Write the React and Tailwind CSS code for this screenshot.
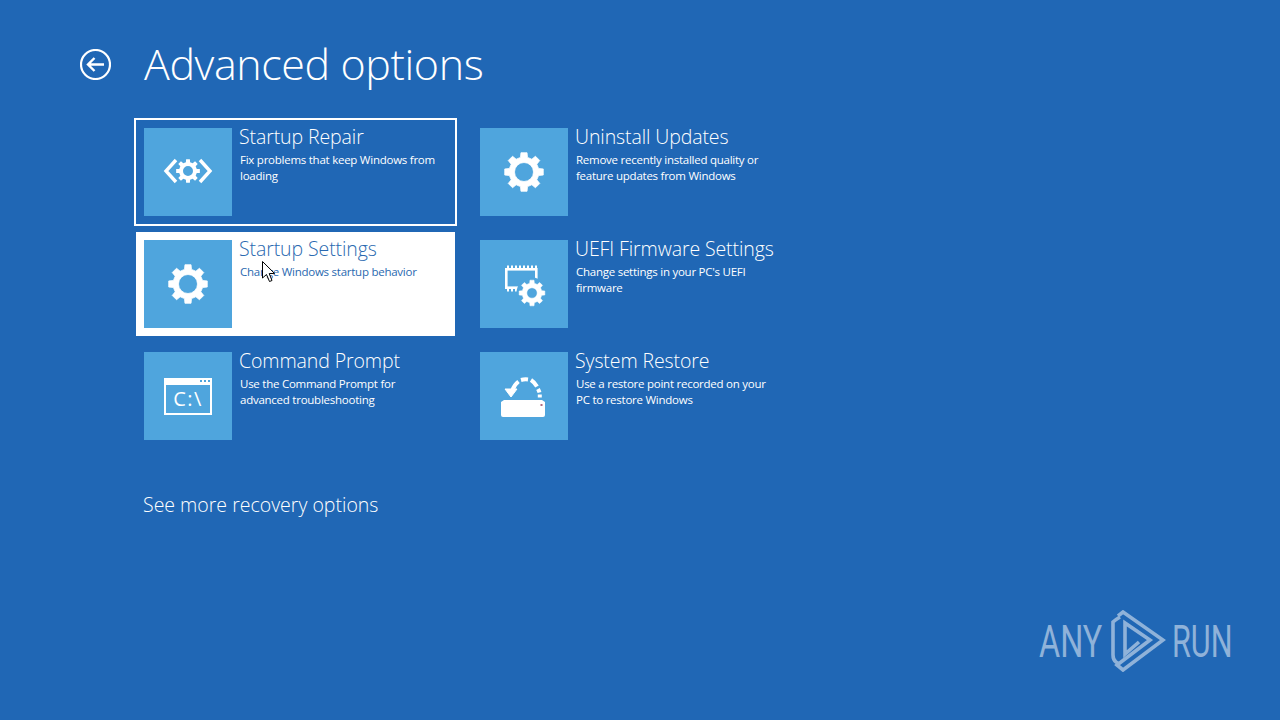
const FONT = "font-['Open_Sans','Noto_Sans',sans-serif]";

function gearPath(cx, cy, rOuter, rRoot, rHole, teeth = 8) {
  const pts = [];
  const step = (Math.PI * 2) / teeth;
  for (let i = 0; i < teeth; i++) {
    const a = i * step - Math.PI / 2;
    const w = step * 0.2;
    const w2 = step * 0.3;
    pts.push([a - w2, rRoot], [a - w, rOuter], [a + w, rOuter], [a + w2, rRoot]);
  }
  const outer = pts
    .map(([a, r], i) => `${i ? "L" : "M"}${(cx + r * Math.cos(a)).toFixed(2)} ${(cy + r * Math.sin(a)).toFixed(2)}`)
    .join(" ");
  return `${outer} Z M${cx - rHole} ${cy} a${rHole} ${rHole} 0 1 0 ${rHole * 2} 0 a${rHole} ${rHole} 0 1 0 ${-rHole * 2} 0 Z`;
}

const Gear = () => (
  <svg width="88" height="88" viewBox="0 0 88 88">
    <path d={gearPath(44, 44, 19.5, 15, 9.5)} fill="#fff" fillRule="evenodd" stroke="#fff" strokeWidth="0.8" strokeLinejoin="round" />
  </svg>
);

const Repair = () => (
  <svg width="88" height="88" viewBox="0 0 88 88">
    <path d={gearPath(44, 43, 12, 9, 5)} fill="#fff" fillRule="evenodd" />
    <path d="M32 32 L22 43 L32 54" fill="none" stroke="#fff" strokeWidth="3.4" />
    <path d="M56 32 L66 43 L56 54" fill="none" stroke="#fff" strokeWidth="3.4" />
  </svg>
);

const pinsTop = [27, 31, 35, 39, 43, 47, 51, 55];
const pinsBottom = [27, 31, 35, 39];

const Firmware = () => (
  <svg width="88" height="88" viewBox="0 0 88 88">
    <rect x="26.3" y="29.3" width="30" height="18.4" fill="none" stroke="#fff" strokeWidth="2.6" />
    {pinsTop.map((x) => (
      <rect key={x} x={x} y="25.5" width="2" height="2.5" fill="#fff" />
    ))}
    {pinsBottom.map((x) => (
      <rect key={x} x={x} y="49" width="2" height="2.5" fill="#fff" />
    ))}
    <circle cx="52" cy="53" r="15.5" fill="#4fa5dd" />
    <path d={gearPath(52, 53, 13, 10, 5.2)} fill="#fff" fillRule="evenodd" stroke="#fff" strokeWidth="0.5" strokeLinejoin="round" />
  </svg>
);

const Restore = () => (
  <svg width="88" height="88" viewBox="0 0 88 88">
    <path d="M21 50 L24 48 H62 L65 50 V63 Q65 65 63 65 H23 Q21 65 21 63 Z" fill="#fff" />
    <rect x="60.5" y="52" width="2" height="2" fill="#b06a80" />
    <path d="M32.5 38 A18 18 0 0 1 38.5 29.5" fill="none" stroke="#fff" strokeWidth="4" />
    <path d="M41 28 A18 18 0 0 1 48 27.5" fill="none" stroke="#fff" strokeWidth="4" />
    <path d="M51 28 A18 18 0 0 1 57 34.5" fill="none" stroke="#fff" strokeWidth="4" />
    <path d="M58 37 A18 18 0 0 1 59.5 40.5" fill="none" stroke="#fff" strokeWidth="4" />
    <path d="M59.8 42.5 V45.5" fill="none" stroke="#fff" strokeWidth="4" />
    <path d="M25 37 H37 L31 45 Z" fill="#fff" stroke="#fff" strokeWidth="1" />
  </svg>
);

const Prompt = () => (
  <div className="relative flex h-[37px] w-[48px] flex-col border-2 border-t-[7px] border-white">
    <div className="absolute right-0 top-[-5px] flex gap-[2px]">
      <span className="h-[2px] w-[2px] bg-[#4fa5dd]" />
      <span className="h-[2px] w-[2px] bg-[#4fa5dd]" />
      <span className="h-[2px] w-[2px] bg-[#4fa5dd]" />
    </div>
    <div className={`flex flex-1 items-center justify-center text-[20px] leading-none tracking-[1.5px] text-white ${FONT}`}>C:\</div>
  </div>
);

function Item({ title, lines, icon, hover, focus }) {
  return (
    <div className={`flex h-[104px] w-[319px] gap-[7px] p-2 ${hover ? "bg-white text-[#2a69b0]" : "text-white"} ${focus ? "outline-2 outline-white" : ""}`}>
      <div className="flex h-[88px] w-[88px] shrink-0 items-center justify-center bg-[#4fa5dd]">{icon}</div>
      <div className={`min-w-0 ${FONT}`}>
        <div className="mt-[-5px] whitespace-nowrap text-[19.5px] font-light leading-[27px] tracking-[-0.1px]">{title}</div>
        <div className="ml-px mt-[2px] text-[11.5px] leading-[16px] tracking-[-0.25px]">
          {lines.map((l) => (
            <div key={l} className="whitespace-nowrap">{l}</div>
          ))}
        </div>
      </div>
    </div>
  );
}

export default function App() {
  return (
    <div className="relative h-screen w-full overflow-hidden bg-[#2067b5] text-white">
      <div className="pl-20 pt-[36px]">
        <div className="flex h-[56px] items-center gap-[33px]">
          <svg width="31" height="31" viewBox="0 0 31 31" fill="none" stroke="#fff">
            <circle cx="15.5" cy="15.5" r="14.5" strokeWidth="2.2" />
            <path d="M24 15.5 H8 M14.5 9 L8 15.5 L14.5 22" strokeWidth="2.4" />
          </svg>
          <h1 className={`text-[43px] font-light leading-[56px] tracking-[-0.4px] ${FONT}`}>Advanced options</h1>
        </div>
        <div className="ml-14 mt-[28px] grid w-[656px] grid-cols-[320px_320px] gap-x-4 gap-y-2">
          <Item focus title="Startup Repair" lines={["Fix problems that keep Windows from", "loading"]} icon={<Repair />} />
          <Item title="Uninstall Updates" lines={["Remove recently installed quality or", "feature updates from Windows"]} icon={<Gear />} />
          <Item hover title="Startup Settings" lines={["Change Windows startup behavior"]} icon={<Gear />} />
          <Item title="UEFI Firmware Settings" lines={["Change settings in your PC's UEFI", "firmware"]} icon={<Firmware />} />
          <Item title="Command Prompt" lines={["Use the Command Prompt for", "advanced troubleshooting"]} icon={<Prompt />} />
          <Item title="System Restore" lines={["Use a restore point recorded on your", "PC to restore Windows"]} icon={<Restore />} />
        </div>
        <div className={`ml-[63px] mt-[43px] text-[19.5px] font-light leading-[27px] tracking-[0px] ${FONT}`}>See more recovery options</div>
      </div>

      <svg className="absolute left-[262px] top-[261px]" width="14" height="22" viewBox="0 0 14 22">
        <path d="M0.5 0.5 V17 L4.5 13.5 L7.5 20.5 L10 19.5 L7.2 12.6 L12.5 12.4 Z" fill="#fff" stroke="#000" strokeWidth="1" />
      </svg>

      <div className="absolute left-[1039px] top-[610px] flex h-[62px] w-[192px] items-center text-[#8fb2d9]">
        <span className="w-[62px] origin-left scale-x-[0.72] whitespace-nowrap font-['Roboto',sans-serif] text-[45px] font-normal leading-none">ANY</span>
        <svg className="ml-[9px] shrink-0" width="56" height="62" viewBox="8 0 54 62" fill="none" stroke="#8fb2d9" strokeWidth="3.6">
          <path d="M17 7 Q12 10 10 12 V45 Q10 50 13 52 L16 54" />
          <path d="M15 6 L20 2 L60 30 L20 60 L14 55 L47 30 L22 13 V44 L36 32" />
        </svg>
        <span className="ml-[6px] w-[60px] origin-left scale-x-[0.68] whitespace-nowrap font-['Roboto',sans-serif] text-[45px] font-normal leading-none">RUN</span>
      </div>
    </div>
  );
}
